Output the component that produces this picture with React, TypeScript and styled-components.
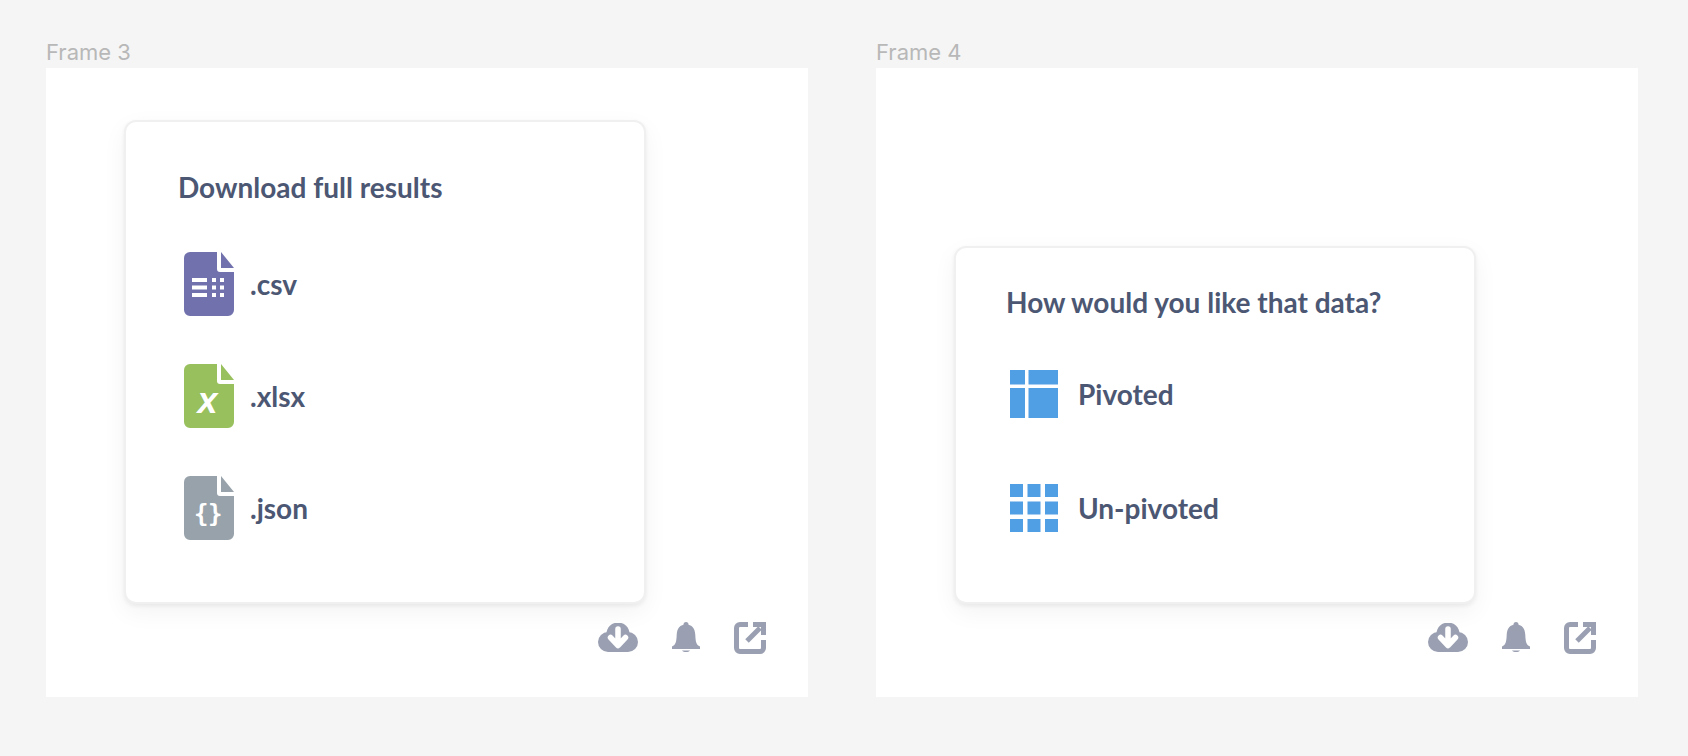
import styled, { createGlobalStyle } from 'styled-components';

const GlobalStyle = createGlobalStyle`
    html, body {
        margin: 0;
        padding: 0;
        background: #f5f5f5;
    }
`;

const Page = styled.div`
    width: 1688px;
    height: 756px;
    box-sizing: border-box;
    padding: 40px 50px 0 46px;
    display: flex;
    gap: 68px;
    overflow: hidden;
`;
const FrameColumn = styled.div`
    width: 762px;
`;
const FrameLabel = styled.div`
    height: 28px;
    font-family: Inter, sans-serif;
    font-size: 22px;
    line-height: 24px;
    color: #b8b8b8;
`;
const Frame = styled.div`
    height: 629px;
    box-sizing: border-box;
    background: #fff;
    padding: 0 42px 43px 78px;
    display: flex;
    flex-direction: column;
    justify-content: flex-end;
`;
const Card = styled.div`
    width: 522px;
    height: 484px;
    box-sizing: border-box;
    background: #fff;
    border: 2px solid #f0f0f0;
    border-radius: 12px;
    box-shadow: 0 2px 4px rgba(0, 0, 0, 0.06), 0 8px 24px rgba(0, 0, 0, 0.05);
    padding: 49px 52px 0;
    font-family: Lato, sans-serif;
    color: #4c5773;
`;
const WideCard = styled(Card)`
    height: 358px;
    padding: 38px 50px 0;
`;
const Title = styled.h2`
    margin: 0;
    font-size: 28px;
    line-height: 32px;
    font-weight: 700;
`;
const FileList = styled.div`
    margin-top: 49px;
    margin-left: 6px;
    display: flex;
    flex-direction: column;
    gap: 48px;
`;
const ChoiceList = styled.div`
    margin-top: 52px;
    margin-left: 4px;
    display: flex;
    flex-direction: column;
    gap: 66px;
`;
const Row = styled.div`
    display: flex;
    align-items: center;
    height: 64px;
    gap: 16px;
    font-size: 28px;
    font-weight: 700;
`;
const ChoiceRow = styled(Row)`
    height: 48px;
    gap: 20px;
`;
const Toolbar = styled.div`
    margin-top: 18px;
    height: 32px;
    display: flex;
    justify-content: flex-end;
    align-items: center;
    gap: 34px;
    color: #9aa0b2;
`;

const FileIcon = ({ color, children }: { color: string; children: React.ReactNode }) => (
    <svg width="50" height="64" viewBox="0 0 50 64">
        <path
            d="M6 0H33V17a3 3 0 0 0 3 3H50V58a6 6 0 0 1-6 6H6a6 6 0 0 1-6-6V6a6 6 0 0 1 6-6Z"
            fill={color}
        />
        <path d="M37 0L50 16H37Z" fill={color} />
        {children}
    </svg>
);

const CsvMarks = () => (
    <g fill="#fff">
        <rect x="8" y="26" width="15" height="4" />
        <rect x="8" y="33.500" width="15" height="4" />
        <rect x="8" y="41" width="15" height="4" />
        {[28, 36].map((x) =>
            [26, 33.5, 41].map((y) => <rect key={`${x}-${y}`} x={x} y={y} width="4" height="4" />),
        )}
    </g>
);

const PivotedIcon = () => (
    <svg width="48" height="48" viewBox="0 0 48 48" fill="#509ee3">
        <rect x="0" y="0" width="15" height="14.5" />
        <rect x="18.5" y="0" width="29.5" height="14.5" />
        <rect x="0" y="18" width="15" height="30" />
        <rect x="18.5" y="18" width="29.5" height="30" />
    </svg>
);

const UnpivotedIcon = () => (
    <svg width="48" height="48" viewBox="0 0 48 48" fill="#509ee3">
        {[0, 17.5, 35].map((x) =>
            [0, 17.5, 35].map((y) => <rect key={`${x}-${y}`} x={x} y={y} width="13" height="13" />),
        )}
    </svg>
);

const CloudIcon = () => (
    <svg width="40" height="30" viewBox="0 0 40 30" fill="currentColor">
        <circle cx="10" cy="19" r="10" />
        <circle cx="30" cy="19" r="10" />
        <circle cx="20" cy="11" r="11.5" />
        <rect x="10" y="15" width="20" height="14" />
        <path
            d="M20 6V21M12.500 14.500L20 22.500L27.500 14.500"
            fill="none"
            stroke="#fff"
            strokeWidth="5.500"
            strokeLinecap="round"
            strokeLinejoin="round"
        />
    </svg>
);

const BellIcon = () => (
    <svg width="28" height="32" viewBox="0 0 28 32" fill="currentColor">
        <circle cx="14" cy="2.500" r="2.500" />
        <path d="M14 2.500c6 0 9 4 9.300 10.500.3 6 .7 10 4.700 11.500V27H0v-2.500C4 23 4.400 19 4.700 13 5 6.500 8 2.500 14 2.500Z" />
        <path d="M10 28.500h8c-.8 1-2.300 1.500-4 1.500s-3.200-.5-4-1.500Z" />
    </svg>
);

const ExternalIcon = () => (
    <svg width="32" height="32" viewBox="0 0 32 32" fill="none" stroke="currentColor">
        <path d="M14 2.500H6A3.500 3.500 0 0 0 2.500 6v20A3.500 3.500 0 0 0 6 29.500h20a3.500 3.500 0 0 0 3.500-3.500v-8" strokeWidth="5" />
        <path d="M13 19L26 6" strokeWidth="5" />
        <path d="M19 0H32V13H27V5H19Z" fill="currentColor" stroke="none" />
    </svg>
);

const Actions = () => (
    <Toolbar>
        <CloudIcon />
        <BellIcon />
        <ExternalIcon />
    </Toolbar>
);

const App = () => (
    <>
        <GlobalStyle />
        <Page>
            <FrameColumn>
                <FrameLabel>Frame 3</FrameLabel>
                <Frame>
                    <Card>
                        <Title>Download full results</Title>
                        <FileList>
                            <Row>
                                <FileIcon color="#7172ad">
                                    <CsvMarks />
                                </FileIcon>
                                .csv
                            </Row>
                            <Row>
                                <FileIcon color="#98c05c">
                                    <text x="23.500" y="49" textAnchor="middle" fill="#fff" fontFamily="'Liberation Sans', sans-serif" fontSize="36" fontWeight="700" fontStyle="italic">
                                        x
                                    </text>
                                </FileIcon>
                                .xlsx
                            </Row>
                            <Row>
                                <FileIcon color="#98a2aa">
                                    <text x="24" y="46" textAnchor="middle" fill="#fff" fontFamily="'DejaVu Sans Mono', monospace" fontSize="24" fontWeight="700" letterSpacing="-0.5">
                                        {'{}'}
                                    </text>
                                </FileIcon>
                                .json
                            </Row>
                        </FileList>
                    </Card>
                    <Actions />
                </Frame>
            </FrameColumn>
            <FrameColumn>
                <FrameLabel>Frame 4</FrameLabel>
                <Frame>
                    <WideCard>
                        <Title>How would you like that data?</Title>
                        <ChoiceList>
                            <ChoiceRow>
                                <PivotedIcon />
                                Pivoted
                            </ChoiceRow>
                            <ChoiceRow>
                                <UnpivotedIcon />
                                Un-pivoted
                            </ChoiceRow>
                        </ChoiceList>
                    </WideCard>
                    <Actions />
                </Frame>
            </FrameColumn>
        </Page>
    </>
);

export default App;
